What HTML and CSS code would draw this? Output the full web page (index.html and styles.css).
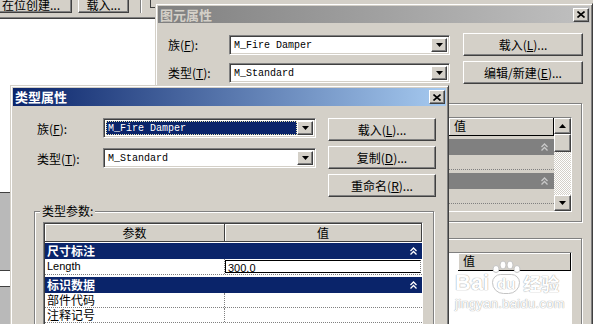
FILE: index.html
```html
<!DOCTYPE html>
<html lang="zh-CN">
<head>
    <meta charset="UTF-8">
    <title>类型属性</title>
    <link rel="stylesheet" href="styles.css">
</head>
<body>
<div class="toolbar">
    <span class="btn tb-btn tb-first">在位创建...</span>
    <span class="btn tb-btn tb-load">载入...</span>
    <span class="tb-sep"></span>
    <span class="tb-corner"></span>
</div>
<div class="workspace"></div>
<div class="lower"><div class="lower-band"></div></div>

<!-- 图元属性 (inactive, behind) -->
<div class="win win-back">
    <div class="title title-off">
        <span class="title-text">图元属性</span>
        <span class="btn close"><svg width="8" height="7" viewBox="0 0 8 7"><path d="M0.5 0.5L7.5 6.5M7.5 0.5L0.5 6.5" stroke="#000" stroke-width="1.6"/></svg></span>
    </div>
    <div class="back-form">
        <span class="lbl">族(<u>F</u>):</span>
        <div class="combo">
            <span class="combo-text">M_Fire Damper</span>
            <span class="btn combo-btn"><svg width="7" height="4" viewBox="0 0 7 4"><path d="M0 0h7L3.5 4z"/></svg></span>
        </div>
        <span class="btn form-btn">载入(<u>L</u>)...</span>
        <span class="lbl">类型(<u>T</u>):</span>
        <div class="combo">
            <span class="combo-text">M_Standard</span>
            <span class="btn combo-btn"><svg width="7" height="4" viewBox="0 0 7 4"><path d="M0 0h7L3.5 4z"/></svg></span>
        </div>
        <span class="btn form-btn">编辑/新建(<u>E</u>)...</span>
    </div>
    <div class="group back-group1">
        <div class="back-grid">
            <div class="back-grid-main">
                <div class="bg-head"><span></span><span class="bg-head-cell">值</span></div>
                <div class="bg-cat"><svg class="chev" width="7" height="8" viewBox="0 0 7 8"><path d="M0.5 4L3.5 1L6.5 4M0.5 7.5L3.5 4.5L6.5 7.5" fill="none" stroke="currentColor" stroke-width="1.3"/></svg></div>
                <div class="bg-row"></div>
                <div class="bg-cat"><svg class="chev" width="7" height="8" viewBox="0 0 7 8"><path d="M0.5 4L3.5 1L6.5 4M0.5 7.5L3.5 4.5L6.5 7.5" fill="none" stroke="currentColor" stroke-width="1.3"/></svg></div>
                <div class="bg-row"></div>
            </div>
            <div class="vscroll">
                <span class="btn sb-btn"><svg width="7" height="4" viewBox="0 0 7 4"><path d="M0 4h7L3.5 0z"/></svg></span>
                <span class="btn sb-thumb"></span>
                <span class="sb-track"></span>
                <span class="btn sb-btn"><svg width="7" height="4" viewBox="0 0 7 4"><path d="M0 0h7L3.5 4z"/></svg></span>
            </div>
        </div>
    </div>
    <div class="group back-group2">
        <div class="back-grid2">
            <div class="bg-head bg-head2"><span></span><span class="bg-head-cell">值</span></div>
        </div>
    </div>
</div>

<!-- 类型属性 (active) -->
<div class="win win-front">
    <div class="title title-on">
        <span class="title-text">类型属性</span>
        <span class="btn close"><svg width="8" height="7" viewBox="0 0 8 7"><path d="M0.5 0.5L7.5 6.5M7.5 0.5L0.5 6.5" stroke="#000" stroke-width="1.6"/></svg></span>
    </div>
    <div class="front-top">
        <div class="front-fields">
            <div class="field">
                <span class="lbl">族(<u>F</u>):</span>
                <div class="combo">
                    <span class="combo-text sel">M_Fire Damper</span>
                    <span class="btn combo-btn"><svg width="7" height="4" viewBox="0 0 7 4"><path d="M0 0h7L3.5 4z"/></svg></span>
                </div>
            </div>
            <div class="field">
                <span class="lbl">类型(<u>T</u>):</span>
                <div class="combo">
                    <span class="combo-text">M_Standard</span>
                    <span class="btn combo-btn"><svg width="7" height="4" viewBox="0 0 7 4"><path d="M0 0h7L3.5 4z"/></svg></span>
                </div>
            </div>
        </div>
        <div class="front-buttons">
            <span class="btn">载入(<u>L</u>)...</span>
            <span class="btn">复制(<u>D</u>)...</span>
            <span class="btn">重命名(<u>R</u>)...</span>
        </div>
    </div>
    <div class="group type-group">
        <span class="group-title">类型参数:</span>
        <div class="pgrid">
            <div class="pg-head"><span>参数</span><span>值</span></div>
            <div class="pg-cat"><span>尺寸标注</span><svg class="chev" width="7" height="8" viewBox="0 0 7 8"><path d="M0.5 4L3.5 1L6.5 4M0.5 7.5L3.5 4.5L6.5 7.5" fill="none" stroke="currentColor" stroke-width="1.3"/></svg></div>
            <div class="pg-row pg-row-edit"><span class="lat">Length</span><span class="pg-val"><span class="edit lat">300.0</span></span></div>
            <div class="pg-cat"><span>标识数据</span><svg class="chev" width="7" height="8" viewBox="0 0 7 8"><path d="M0.5 4L3.5 1L6.5 4M0.5 7.5L3.5 4.5L6.5 7.5" fill="none" stroke="currentColor" stroke-width="1.3"/></svg></div>
            <div class="pg-row"><span>部件代码</span><span></span></div>
            <div class="pg-row"><span>注释记号</span><span></span></div>
        </div>
    </div>
</div>

<div class="watermark">
    <div class="wm-logo">
        <span class="wm-bai">Bai</span>
        <span class="wm-paw">
            <svg class="wm-toes" width="30" height="14" viewBox="0 0 30 14"><ellipse cx="5" cy="9" rx="3" ry="3.5"/><ellipse cx="12" cy="5" rx="3" ry="4"/><ellipse cx="19" cy="5" rx="3" ry="4"/><ellipse cx="26" cy="9" rx="3" ry="3.5"/></svg>
            <span class="wm-du">du</span>
        </span>
        <span class="wm-jy">经验</span>
    </div>
    <div class="wm-url">jingyan.baidu.com</div>
</div>
</body>
</html>
```

FILE: styles.css
```css
*{
    margin: 0;
    padding: 0;
    box-sizing: border-box;
}
body{
    width: 593px;
    height: 324px;
    overflow: hidden;
    position: relative;
    background: #fff;
    font-family: "Noto Sans CJK SC", "Liberation Sans", sans-serif;
    font-size: 12px;
    color: #000;
}
u{
    text-underline-offset: 1px;
}
.lat{
    font-family: "Liberation Sans", sans-serif;
    font-size: 11px;
}

/* classic raised button */
.btn{
    display: flex;
    align-items: center;
    justify-content: center;
    background: #d4d0c8;
    border: 1px solid;
    border-color: #fff #404040 #404040 #fff;
    box-shadow: inset -1px -1px #808080;
    white-space: nowrap;
    line-height: 1;
}

/* app behind */
.toolbar{
    display: flex;
    align-items: flex-start;
    height: 19px;
    background: #d4d0c8;
    border-bottom: 1px solid #404040;
    box-shadow: inset 0 -1px #808080;
}
.tb-btn{
    height: 23px;
    margin-top: -10px;
    padding-top: 6px;
}
.tb-first{width: 82px;margin-left: -10px;}
.tb-load{width: 51px;margin-left: 6px;}
.tb-sep{
    width: 2px;
    height: 13px;
    margin-left: 11px;
    border-left: 1px solid #808080;
    border-right: 1px solid #fff;
}
.tb-corner{
    width: 6px;
    height: 8px;
    margin-left: 8px;
    border-left: 1px solid #404040;
    border-bottom: 1px solid #404040;
}
.workspace{height: 173px;}
.lower{
    height: 132px;
    background: #b9b9b9;
    border-top: 1px solid #404040;
    padding-top: 77px;
}
.lower-band{
    height: 17px;
    background: #fff;
    border-top: 1px solid #404040;
    border-bottom: 1px solid #404040;
}

/* windows */
.win{
    position: absolute;
    background: #d4d0c8;
    border: 1px solid;
    border-color: #d4d0c8 #404040 #404040 #d4d0c8;
    box-shadow: inset 1px 1px #fff, inset -1px -1px #808080;
    padding: 2px;
}
.win-back{left: 155px;top: 3px;width: 438px;height: 330px;}
.win-front{left: 10px;top: 85px;width: 439px;height: 250px;}
.title{
    display: flex;
    align-items: center;
    justify-content: space-between;
    height: 18px;
    padding: 0 1px 0 2px;
    font-size: 13px;
    font-weight: bold;
}
.title-text{line-height: 16px;}
.title-on{
    background: linear-gradient(90deg, #0a246a, #a6caf0);
    color: #fff;
}
.title-off{
    height: 17px;
    background: linear-gradient(90deg, #808080, #c0c0c0);
    color: #d4d0c8;
}
.close{width: 16px;height: 14px;}

.lbl{white-space: nowrap;}
.combo{
    display: flex;
    height: 20px;
    padding: 2px;
    background: #fff;
    border: 1px solid;
    border-color: #808080 #fff #fff #808080;
    box-shadow: inset 1px 1px #404040, inset -1px -1px #d4d0c8;
}
.combo-text{
    flex: 1;
    padding-left: 2px;
    font-family: "Liberation Mono", monospace;
    font-size: 10px;
    line-height: 16px;
    white-space: nowrap;
}
.combo-text.sel{
    background: #0a246a;
    color: #fff;
    outline: 1px dotted #e8e4b0;
    outline-offset: -1px;
}
.combo-btn{width: 16px;flex: none;}

/* back dialog */
.back-form{
    display: grid;
    grid-template-columns: 61px 221px 133px;
    grid-auto-rows: 23px;
    row-gap: 5px;
    align-items: center;
    padding: 10px 0 0 10px;
}
.form-btn{
    width: 120px;
    height: 23px;
    justify-self: end;
}
.group{
    border: 1px solid #808080;
    box-shadow: inset 1px 1px #fff, 1px 1px #fff;
}
.back-group1{
    height: 119px;
    margin: 19px 8px 0 10px;
    padding: 13px 9px 0 0;
}
.back-grid{
    display: flex;
    height: 95px;
    border: 1px solid;
    border-color: #808080 #fff #fff #808080;
}
.back-grid-main{flex: 1;}
.bg-head{
    display: grid;
    grid-template-columns: 1fr 105px;
    height: 18px;
}
.bg-head-cell{
    padding-left: 5px;
    line-height: 16px;
    border-right: 1px solid #000;
    border-bottom: 1px solid #000;
    box-shadow: inset 1px 1px #fff;
}
.bg-cat{
    display: flex;
    align-items: center;
    justify-content: flex-end;
    height: 16px;
    margin-top: 3px;
    padding-right: 6px;
    background: #808080;
    color: #c8c8c8;
}
.bg-row{
    height: 15px;
    border-bottom: 1px dotted #808080;
}
.vscroll{
    display: flex;
    flex-direction: column;
    width: 17px;
}
.sb-btn{height: 16px;}
.sb-thumb{height: 18px;}
.sb-track{
    flex: 1;
    background: repeating-conic-gradient(#fff 0 25%, #d4d0c8 0 50%) 0 0/2px 2px;
}
.back-group2{
    height: 120px;
    margin: 16px 8px 0 10px;
    padding: 13px 9px 0 0;
}
.back-grid2{
    height: 100px;
    background: #fff;
    border: 1px solid;
    border-color: #808080 #fff #fff #808080;
}
.bg-head2{grid-template-columns: 1fr 113px;}
.bg-head2 .bg-head-cell{background: #d4d0c8;}

/* front dialog */
.front-top{
    display: flex;
    padding: 12px 0 0 24px;
}
.front-fields{
    display: flex;
    flex-direction: column;
    gap: 10px;
}
.field{
    display: flex;
    align-items: center;
    height: 20px;
}
.field .lbl{width: 66px;}
.field .combo{width: 213px;}
.front-buttons{
    display: flex;
    flex-direction: column;
    gap: 5px;
    margin-left: 12px;
}
.front-buttons .btn{width: 108px;height: 23px;}
.type-group{
    height: 200px;
    margin: 14px 12px 0 21px;
    padding: 0 10px 0 8px;
}
.group-title{
    display: block;
    width: fit-content;
    margin: -9px 0 0 -3px;
    padding: 0 2px;
    background: #d4d0c8;
    line-height: 16px;
}
.pgrid{
    margin-top: 3px;
    padding-left: 1px;
    height: 120px;
    background: #fff;
    border: 1px solid;
    border-color: #808080 #fff #fff #808080;
    box-shadow: inset 1px 1px #404040;
}
.pg-head{
    display: grid;
    grid-template-columns: 180px 1fr;
    height: 18px;
}
.pg-head span{
    text-align: center;
    line-height: 17px;
    background: #d4d0c8;
    border-top: 1px solid #404040;
    border-right: 1px solid #404040;
    border-bottom: 1px solid #404040;
    box-shadow: inset 1px 1px #fff;
}
.pg-cat{
    display: flex;
    align-items: center;
    justify-content: space-between;
    height: 16px;
    margin-top: 2px;
    padding: 0 5px 0 2px;
    background: #0a246a;
    color: #fff;
    font-weight: bold;
    line-height: 16px;
}
.pg-row{
    display: grid;
    grid-template-columns: 180px 1fr;
    height: 15px;
    border-bottom: 1px dotted #808080;
}
.pg-row-edit{height: 16px;}
.pg-row span:first-child{
    padding-left: 2px;
    line-height: 14px;
    border-right: 1px dotted #808080;
}
.pg-val{padding: 1px 1px 1px 0;}
.edit{
    display: block;
    height: 13px;
    padding-left: 1px;
    line-height: 11px;
    border: 1px solid #000;
}

/* watermark over the picture */
.watermark{
    position: absolute;
    left: 455px;
    top: 258px;
    color: #fff;
    text-shadow: 0 0 1px #a8a8a8, 0 0 1px #a8a8a8;
    font-family: "Liberation Sans", sans-serif;
}
.wm-logo{
    display: flex;
    align-items: flex-end;
    height: 36px;
}
.wm-bai{font-size: 22px;font-weight: bold;line-height: 22px;}
.wm-paw{
    display: flex;
    flex-direction: column;
    align-items: center;
    margin: 0 2px;
}
.wm-toes{
    fill: #fff;
    stroke: #c4c4c4;
    stroke-width: 1;
}
.wm-du{
    padding: 0 4px;
    font-size: 15px;
    font-weight: bold;
    line-height: 18px;
    border: 1px solid #c4c4c4;
    border-radius: 9px 9px 12px 12px;
}
.wm-jy{
    font-family: "Noto Sans CJK SC", sans-serif;
    font-size: 18px;
    font-weight: bold;
    line-height: 22px;
}
.wm-url{
    margin-top: 3px;
    font-size: 13px;
    line-height: 14px;
    letter-spacing: 0.3px;
}
```
